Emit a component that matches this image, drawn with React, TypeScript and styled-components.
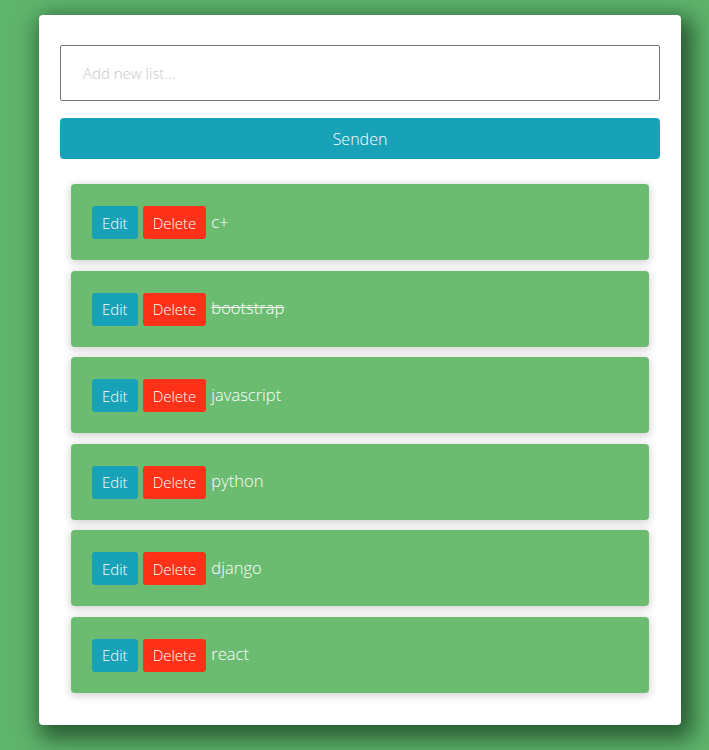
import React from "react";
import styled, { createGlobalStyle } from "styled-components";

const Global = createGlobalStyle`
  html, body { margin: 0; padding: 0; }
  body {
    background: #5fb46c;
    font-family: "Open Sans", "Liberation Sans", sans-serif;
    font-weight: 300;
  }
`;

const Page = styled.div`
  padding: 15px 28px 25px 39px;
`;

const Card = styled.div`
  background: #ffffff;
  border-radius: 4px;
  padding: 30px 21px 32px 21px;
  box-shadow: 6px 8px 22px 6px rgba(20, 60, 30, 0.75);
  display: flex;
  flex-direction: column;
`;

const Input = styled.input`
  box-sizing: border-box;
  height: 56px;
  width: 100%;
  border: 1px solid #767676;
  border-radius: 2px;
  padding: 0 22px;
  font-family: "Open Sans", "Liberation Sans", sans-serif;
  font-weight: 300;
  font-size: 15px;
  outline: none;
  &::placeholder { color: #c8c8c8; }
`;

const SendButton = styled.button`
  margin-top: 17px;
  height: 41px;
  width: 100%;
  border: none;
  border-radius: 4px;
  background: #18a2b8;
  color: #ffffff;
  font-family: "Open Sans", "Liberation Sans", sans-serif;
  font-weight: 300;
  font-size: 16px;
`;

const List = styled.div`
  margin: 25px 11px 0 11px;
  display: flex;
  flex-direction: column;
  gap: 10.6px;
`;

const Item = styled.div`
  box-sizing: border-box;
  height: 76px;
  background: #6bbc70;
  border-radius: 4px;
  box-shadow: 0 2px 8px 1px rgba(0, 0, 0, 0.18);
  display: flex;
  align-items: center;
  padding: 0 21px;
  color: #ffffff;
`;

const SmallButton = styled.button<{ $variant: "edit" | "delete" }>`
  height: 33px;
  border: none;
  border-radius: 3px;
  padding: 0 10px;
  margin-right: 5px;
  background: ${(p) => (p.$variant === "edit" ? "#18a2b8" : "#ff3118")};
  color: #ffffff;
  font-family: "Open Sans", "Liberation Sans", sans-serif;
  font-weight: 300;
  font-size: 15px;
  margin-top: 1px;
`;

const Label = styled.span<{ $done?: boolean }>`
  font-size: 16.5px;
  font-weight: 300;
  text-decoration: ${(p) => (p.$done ? "line-through" : "none")};
  margin-top: -2px;
`;

const items = [
  { name: "c+", done: false },
  { name: "bootstrap", done: true },
  { name: "javascript", done: false },
  { name: "python", done: false },
  { name: "django", done: false },
  { name: "react", done: false },
];

export default function App() {
  return (
    <>
      <Global />
      <Page>
        <Card>
          <Input placeholder="Add new list..." />
          <SendButton>Senden</SendButton>
          <List>
            {items.map((it) => (
              <Item key={it.name}>
                <SmallButton $variant="edit">Edit</SmallButton>
                <SmallButton $variant="delete">Delete</SmallButton>
                <Label $done={it.done}>{it.name}</Label>
              </Item>
            ))}
          </List>
        </Card>
      </Page>
    </>
  );
}
